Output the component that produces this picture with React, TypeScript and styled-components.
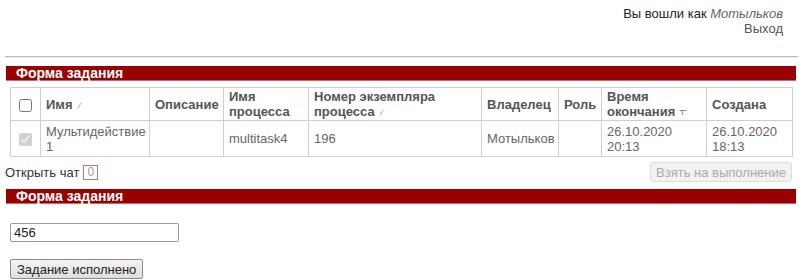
import React from "react";
import styled, { createGlobalStyle } from "styled-components";

const Global = createGlobalStyle`
  html, body { margin: 0; padding: 0; background: #fff; }
  body { font-family: "Liberation Sans", Arial, sans-serif; font-size: 13px; color: #222; }
`;

const Page = styled.div`
  width: 800px;
  height: 280px;
  overflow: hidden;
  box-sizing: border-box;
  padding: 6px 0 0 5px;
`;

const UserInfo = styled.div`
  text-align: right;
  padding-right: 17px;
  line-height: 15px;
`;

const UserName = styled.span`
  font-style: italic;
  color: #666;
`;

const Logout = styled.div`
  color: #555;
`;

const Divider = styled.div`
  margin: 20px 2px 0 0;
  border-top: 1px solid #bdbdbd;
  border-bottom: 1px solid #ececec;
`;

const SectionBar = styled.div<{ $top: number }>`
  margin: ${(p) => p.$top}px 4px 0 1px;
  height: 15px;
  background: #990000;
  border-bottom: 1px solid #c96a6a;
  box-sizing: border-box;
  color: #fff;
  font-weight: bold;
  font-size: 14px;
  line-height: 15px;
  padding-left: 10px;
`;

const Table = styled.table`
  margin: 6px 0 0 5px;
  width: 782px;
  border-collapse: collapse;
  table-layout: fixed;
  border: 1px solid #c4c4c4;
`;

const Th = styled.th<{ $w: number }>`
  width: ${(p) => p.$w}px;
  box-sizing: border-box;
  border: 1px solid #cfcfcf;
  padding: 1px 5px;
  height: 33px;
  text-align: left;
  vertical-align: middle;
  font-weight: bold;
  color: #555;
  line-height: 15px;
`;

const Td = styled.td<{ $center?: boolean }>`
  border: 1px solid #cfcfcf;
  padding: 1px 5px;
  height: 33px;
  vertical-align: middle;
  color: #666;
  line-height: 15px;
  text-align: ${(p) => (p.$center ? "center" : "left")};
`;

const CheckCell = styled.th`
  width: 30px;
  box-sizing: border-box;
  border: 1px solid #cfcfcf;
  padding: 0;
  text-align: center;
  vertical-align: middle;
`;

const Check = styled.input`
  margin: 0;
  width: 13px;
  height: 13px;
  vertical-align: middle;
`;

const SortIcon = styled.svg`
  display: inline-block;
  margin-left: 4px;
  vertical-align: 0px;
`;

const ActionRow = styled.div`
  margin: 5px 8px 0 0;
  height: 20px;
  display: flex;
  align-items: center;
  justify-content: space-between;
`;

const ChatLink = styled.div`
  display: flex;
  align-items: center;
  color: #333;
  gap: 4px;
`;

const ChatCount = styled.span`
  display: inline-block;
  box-sizing: border-box;
  width: 15px;
  height: 15px;
  border: 1px solid #c47272;
  color: #999;
  font-size: 12px;
  line-height: 13px;
  text-align: center;
`;

const TakeButton = styled.button`
  box-sizing: border-box;
  width: 142px;
  height: 20px;
  padding: 0;
  border: 1px solid #dcdcdc;
  border-radius: 3px;
  background: #f2f2f2;
  color: #aaa;
  font-family: "Liberation Sans", Arial, sans-serif;
  font-size: 13px;
`;

const FormBody = styled.div`
  padding: 19px 0 0 5px;
  display: flex;
  flex-direction: column;
  align-items: flex-start;
  gap: 17px;
`;

const TextInput = styled.input`
  box-sizing: border-box;
  width: 169px;
  height: 19px;
  margin: 0;
  padding: 0 3px;
  border: 1px solid #999;
  border-radius: 2px;
  font-family: "Liberation Sans", Arial, sans-serif;
  font-size: 13px;
  color: #222;
  outline: none;
`;

const DoneButton = styled.button`
  box-sizing: border-box;
  height: 20px;
  padding: 0 6px;
  border: 1px solid #8a8a8a;
  border-radius: 2px;
  background: linear-gradient(#f4f4f4, #dedede);
  color: #222;
  font-family: "Liberation Sans", Arial, sans-serif;
  font-size: 13px;
`;

const Sort = ({ active }: { active?: boolean }) =>
  active ? (
    <SortIcon width="8" height="7" viewBox="0 0 8 7">
      <path d="M0.5 1.5 H7.5 M2.5 1.5 L4 6" stroke="#888" strokeWidth="1" fill="none" />
    </SortIcon>
  ) : (
    <SortIcon width="5" height="7" viewBox="0 0 5 7">
      <path d="M0.8 6.2 L4.2 0.8" stroke="#aaa" strokeWidth="1" fill="none" />
    </SortIcon>
  );

export default function App() {
  return (
    <Page>
      <Global />
      <UserInfo>
        Вы вошли как <UserName>Мотыльков</UserName>
        <Logout>Выход</Logout>
      </UserInfo>
      <Divider />
      <SectionBar $top={8}>Форма задания</SectionBar>
      <Table>
        <thead>
          <tr>
            <CheckCell>
              <Check type="checkbox" />
            </CheckCell>
            <Th $w={109}>
              Имя
              <Sort />
            </Th>
            <Th $w={74}>Описание</Th>
            <Th $w={85}>Имя процесса</Th>
            <Th $w={173}>
              Номер экземпляра процесса
              <Sort />
            </Th>
            <Th $w={77}>Владелец</Th>
            <Th $w={43}>Роль</Th>
            <Th $w={105}>
              Время окончания
              <Sort active />
            </Th>
            <Th $w={86}>Создана</Th>
          </tr>
        </thead>
        <tbody>
          <tr>
            <Td $center>
              <Check type="checkbox" checked disabled readOnly />
            </Td>
            <Td>Мультидействие 1</Td>
            <Td></Td>
            <Td>multitask4</Td>
            <Td>196</Td>
            <Td>Мотыльков</Td>
            <Td></Td>
            <Td>26.10.2020 20:13</Td>
            <Td>26.10.2020 18:13</Td>
          </tr>
        </tbody>
      </Table>
      <ActionRow>
        <ChatLink>
          Открыть чат <ChatCount>0</ChatCount>
        </ChatLink>
        <TakeButton disabled>Взять на выполнение</TakeButton>
      </ActionRow>
      <SectionBar $top={7}>Форма задания</SectionBar>
      <FormBody>
        <TextInput defaultValue="456" />
        <DoneButton>Задание исполнено</DoneButton>
      </FormBody>
    </Page>
  );
}
